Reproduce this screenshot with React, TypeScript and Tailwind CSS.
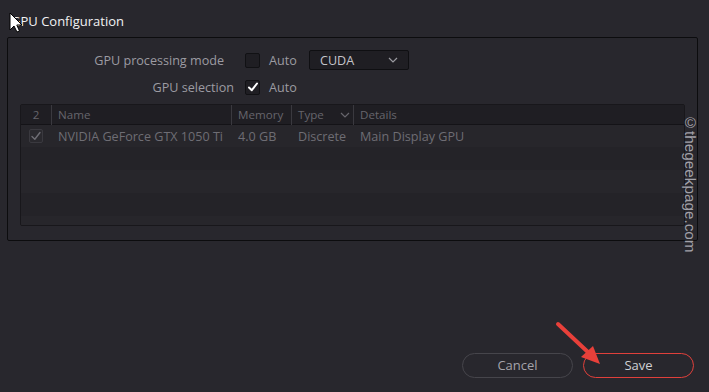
import React from "react";

const Check = ({ color = "#ffffff", w = 2 }: { color?: string; w?: number }) => (
  <svg width="12" height="12" viewBox="0 0 12 12">
    <path d="M2 6.5 L4.8 9.2 L10 2.5" fill="none" stroke={color} strokeWidth={w} strokeLinecap="round" strokeLinejoin="round" />
  </svg>
);

const Chevron = ({ color = "#9a9aa0" }: { color?: string }) => (
  <svg width="10" height="6" viewBox="0 0 10 6">
    <path d="M1 1 L5 5 L9 1" fill="none" stroke={color} strokeWidth="1.2" />
  </svg>
);

export default function App() {
  return (
    <div
      className="relative w-[709px] h-[392px] bg-[#28272d] overflow-hidden"
      style={{ fontFamily: '"Open Sans", "Noto Sans", sans-serif' }}
    >
      <div className="pl-[11px] pt-[12px] text-[13px] leading-[18px] text-[#f2f2f4]">GPU Configuration</div>

      <div className="ml-[7px] mt-[7px] w-[691px] h-[204px] border border-[#0c0c0e] rounded-[2px] flex flex-col">
        <div className="mt-[12px] flex items-center h-[20px]">
          <div className="w-[216px] text-right text-[12.6px] leading-[20px] pt-[2px] text-[#9c9ba2]">GPU processing mode</div>
          <div className="ml-[21px] w-[15px] h-[15px] rounded-[2px] border border-[#111114] bg-[#1f1e23]" />
          <div className="ml-[9px] text-[12.6px] leading-[20px] pt-[2px] text-[#9c9ba2] w-[40px]">Auto</div>
          <div className="w-[100px] h-[20px] rounded-[2px] border border-[#0f0f12] bg-[#1f1e23] flex items-center justify-between pl-[10px] pr-[10px]">
            <span className="text-[12.6px] leading-[20px] pt-[1px] text-[#c4c4ca]">CUDA</span>
            <Chevron />
          </div>
        </div>
        <div className="mt-[7px] flex items-center h-[20px]">
          <div className="w-[226px] text-right text-[12.6px] leading-[20px] pt-[2px] text-[#9c9ba2]">GPU selection</div>
          <div className="ml-[11px] w-[15px] h-[15px] rounded-[2px] border border-[#111114] bg-[#1f1e23] flex items-center justify-center">
            <Check />
          </div>
          <div className="ml-[9px] text-[12.6px] leading-[20px] pt-[2px] text-[#9c9ba2]">Auto</div>
        </div>

        <div className="ml-[12px] mt-[7px] w-[665px] h-[122px] border border-[#18171b] rounded-[2px] bg-[#242328] flex flex-col overflow-hidden">
          <div className="h-[20px] flex items-center bg-[#1f1e23] border-b border-[#141317] text-[11.6px] text-[#66656c]">
            <div className="w-[30px] text-center pt-[1px]">2</div>
            <div className="w-[1px] h-[20px] bg-[#3a393f]" />
            <div className="w-[179px] pl-[6px] pt-[1px]">Name</div>
            <div className="w-[1px] h-[20px] bg-[#3a393f]" />
            <div className="w-[59px] pl-[6px] pt-[1px]">Memory</div>
            <div className="w-[1px] h-[20px] bg-[#3a393f]" />
            <div className="w-[61px] pl-[6px] pr-[3px] pt-[1px] flex items-center justify-between">
              <span>Type</span>
              <Chevron color="#66656c" />
            </div>
            <div className="w-[1px] h-[20px] bg-[#3a393f]" />
            <div className="pl-[6px] pt-[1px]">Details</div>
          </div>
          <div className="h-[22px] flex items-center bg-[#27262b] text-[12.6px] text-[#6e6d74]">
            <div className="w-[30px] flex justify-center">
              <div className="w-[14px] h-[14px] rounded-[2px] border border-[#3a393f] bg-[#2a292e] flex items-center justify-center">
                <Check color="#6e6d74" w={1.4} />
              </div>
            </div>
            <div className="w-[180px] pl-[7px] pt-[2px] whitespace-nowrap">NVIDIA GeForce GTX 1050 Ti</div>
            <div className="w-[60px] pl-[7px] pt-[2px]">4.0 GB</div>
            <div className="w-[62px] pl-[7px] pt-[2px]">Discrete</div>
            <div className="pl-[7px] pt-[2px]">Main Display GPU</div>
          </div>
          <div className="h-[23px] bg-[#242328]" />
          <div className="h-[23px] bg-[#27262b]" />
          <div className="h-[23px] bg-[#242328]" />
          <div className="flex-1 bg-[#27262b]" />
        </div>
      </div>

      <div className="mt-[112px] flex justify-end gap-[10px] pr-[15px]">
        <div className="w-[111px] h-[25px] rounded-full border border-[#46454b] flex items-center justify-center text-[13px] text-[#a4a3aa]">
          Cancel
        </div>
        <div className="w-[111px] h-[25px] rounded-full border border-[#e0403b] flex items-center justify-center text-[13px] text-[#cfcfd4]">
          Save
        </div>
      </div>

      <div
        className="absolute left-[682px] top-[114px] text-[15.3px] leading-[16px] text-[#a2a1a9] [writing-mode:vertical-rl]"
        style={{ fontFamily: '"Liberation Sans", Arial, sans-serif' }}
      >
        ©thegeekpage.com
      </div>

      <svg className="absolute left-0 top-0" width="709" height="392" viewBox="0 0 709 392">
        <line x1="558" y1="324" x2="590" y2="354" stroke="#e8403a" strokeWidth="4" strokeLinecap="round" />
        <polygon points="600,364 581,357 593,346" fill="#e8403a" />
        <path d="M10 13 L10 30 L14 26 L17 32 L19.5 31 L16.8 25 L22 25 Z" fill="#ffffff" stroke="#000000" strokeWidth="1" strokeLinejoin="round" />
      </svg>
    </div>
  );
}
